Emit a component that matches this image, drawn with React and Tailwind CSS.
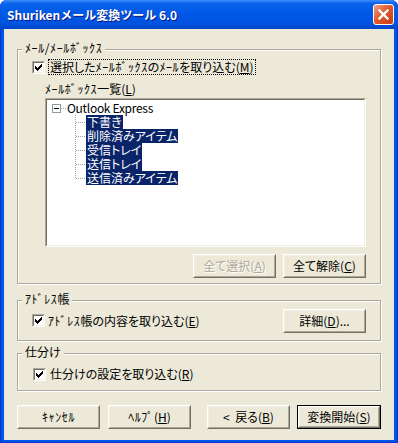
import React from "react";

const folders = ["下書き", "削除済みアイテム", "受信トレイ", "送信トレイ", "送信済みアイテム"];

function Check() {
    return (
        <svg width="7" height="7" viewBox="0 0 7 7" shapeRendering="crispEdges">
            <path
                d="M6 0h1v1h-1z M5 1h2v1h-2z M0 2h1v1h-1z M4 2h3v1h-3z M0 3h2v1h-2z M3 3h3v1h-3z M0 4h5v1h-5z M1 5h3v1h-3z M2 6h1v1h-1z"
                fill="#000"
            />
        </svg>
    );
}

function Checkbox() {
    return (
        <div className="h-[13px] w-[13px] shrink-0 border border-t-[#ACA899] border-l-[#ACA899] border-b-white border-r-white">
            <div className="flex h-full w-full items-center justify-center border border-t-[#716F64] border-l-[#716F64] border-b-[#F1EFE2] border-r-[#F1EFE2] bg-white">
                <Check />
            </div>
        </div>
    );
}

// half-width katakana run, spaced a little wider like the bitmap UI font
function H({ children }) {
    return <span className="tracking-[0.6px]">{children}</span>;
}

function Key({ k }) {
    return <span className="underline underline-offset-[1px]">{k}</span>;
}

function Btn({ children, disabled, isDefault, className = "" }) {
    const face = (
        <div className="h-full w-full border border-t-white border-l-white border-b-[#716F64] border-r-[#716F64]">
            <div
                className={
                    "flex h-full w-full items-center justify-center whitespace-pre border border-t-[#F1EFE2] border-l-[#F1EFE2] border-b-[#ACA899] border-r-[#ACA899] " +
                    (disabled ? "text-[#ACA899] [text-shadow:1px_1px_0_#fff]" : "text-black")
                }
            >
                {children}
            </div>
        </div>
    );
    return (
        <div className={"h-[24px] shrink-0 " + (isDefault ? "border border-black " : "") + className}>
            {face}
        </div>
    );
}

function Group({ label, className = "", children }) {
    return (
        <div className={"relative shrink-0 border border-[#ACA899] shadow-[inset_1px_1px_0_#fff,1px_1px_0_#fff] " + className}>
            <span className="absolute left-[4px] top-[-9px] bg-[#ECE9D8] px-[3px] leading-[14px]">{label}</span>
            {children}
        </div>
    );
}

function ParentLine() {
    return (
        <svg width="20" height="14" viewBox="0 0 20 14" shapeRendering="crispEdges" className="shrink-0">
            <rect x="5.5" y="3.5" width="8" height="8" fill="#fff" stroke="#919B9C" />
            <rect x="7" y="7" width="5" height="1" fill="#000" />
            <line x1="14" y1="7.5" x2="20" y2="7.5" stroke="#A0A0A0" strokeDasharray="1 1" />
        </svg>
    );
}

function ChildLine({ last }) {
    return (
        <svg width="39" height="14" viewBox="0 0 39 14" shapeRendering="crispEdges" className="shrink-0">
            <line x1="28.5" y1="0" x2="28.5" y2={last ? 8 : 14} stroke="#A0A0A0" strokeDasharray="1 1" />
            <line x1="29" y1="7.5" x2="38" y2="7.5" stroke="#A0A0A0" strokeDasharray="1 1" />
        </svg>
    );
}

export default function App() {
    return (
        <div className="h-[443px] w-[398px] bg-white font-['Noto_Sans_CJK_JP','Noto_Sans',sans-serif]">
            <div className="flex h-full w-full flex-col overflow-hidden rounded-t-[7px] bg-[#0055E5] shadow-[inset_1px_0_0_#0831D9,inset_-1px_0_0_#0831D9,inset_0_-1px_0_#0831D9]">
                {/* title bar */}
                <div className="flex h-[29px] shrink-0 items-center bg-[linear-gradient(to_bottom,#3D8DF8_0%,#0A62EC_12%,#0058E8_45%,#0053E0_80%,#0046C8_100%)] pl-[7px] pr-[4px]">
                    <span className="text-[12px] font-bold leading-[14px] text-white [text-shadow:1px_1px_0_#0A1883]">
                        Shurikenメール変換ツール 6.0
                    </span>
                    <div className="ml-auto flex h-[21px] w-[21px] items-center justify-center rounded-[3px] border border-white bg-[linear-gradient(135deg,#F2A285_0%,#E2592F_45%,#C63A12_100%)]">
                        <svg width="11" height="11" viewBox="0 0 11 11">
                            <path d="M1.5 1.5L9.5 9.5M9.5 1.5L1.5 9.5" stroke="#fff" strokeWidth="2.4" strokeLinecap="square" />
                        </svg>
                    </div>
                </div>

                {/* body */}
                <div className="flex flex-1 flex-col px-[4px] pb-[3px]">
                    <div className="flex flex-1 flex-col bg-[#ECE9D8] px-[13px] text-[12px] leading-[14px] text-black [font-feature-settings:'palt']">
                        <Group label={<H>ﾒｰﾙ/ﾒｰﾙﾎﾞｯｸｽ</H>} className="mt-[20px] h-[235px]">
                            <div className="flex flex-col px-[14px]">
                                <div className="mt-[9px] flex h-[16px] items-center">
                                    <Checkbox />
                                    <span className="ml-[3px] flex h-[16px] items-center border border-dotted border-black px-[1px]">
                                        選択した<H>ﾒｰﾙﾎﾞｯｸｽ</H>の<H>ﾒｰﾙ</H>を取り込む(<Key k="M" />)
                                    </span>
                                </div>
                                <div className="ml-[13px] mt-[7px] h-[14px]">
                                    <H>ﾒｰﾙﾎﾞｯｸｽ</H>一覧(<Key k="L" />)
                                </div>
                                <div className="ml-[13px] mt-[2px] h-[149px] w-[321px] border border-t-[#ACA899] border-l-[#ACA899] border-b-white border-r-white">
                                    <div className="h-full w-full border border-t-[#716F64] border-l-[#716F64] border-b-[#F1EFE2] border-r-[#F1EFE2] bg-white pt-[1px]">
                                        <div className="flex h-[14px] items-center">
                                            <ParentLine />
                                            <span className="tracking-[-0.3px]">Outlook Express</span>
                                        </div>
                                        {folders.map((f, i) => (
                                            <div key={f} className="flex h-[14px] items-center">
                                                <ChildLine last={i === folders.length - 1} />
                                                <div className="flex h-[14px] items-center bg-[#0A246A] px-[1px] text-white">{f}</div>
                                            </div>
                                        ))}
                                    </div>
                                </div>
                                <div className="mt-[7px] flex justify-end gap-[7px]">
                                    <Btn disabled className="w-[83px]">
                                        全て選択(<Key k="A" />)
                                    </Btn>
                                    <Btn className="w-[83px]">
                                        全て解除(<Key k="C" />)
                                    </Btn>
                                </div>
                            </div>
                        </Group>

                        <Group label={<><H>ｱﾄﾞﾚｽ</H>帳</>} className="mt-[16px] h-[41px]">
                            <div className="flex h-full items-center px-[14px]">
                                <Checkbox />
                                <span className="ml-[3px]">
                                    <H>ｱﾄﾞﾚｽ</H>帳の内容を取り込む(<Key k="E" />)
                                </span>
                                <Btn className="ml-auto w-[83px]">
                                    詳細(<Key k="D" />)...
                                </Btn>
                            </div>
                        </Group>

                        <Group label="仕分け" className="mt-[12px] h-[38px]">
                            <div className="flex items-center pl-[15px] pt-[13px]">
                                <Checkbox />
                                <span className="ml-[4px]">
                                    仕分けの設定を取り込む(<Key k="R" />)
                                </span>
                            </div>
                        </Group>

                        <div className="mt-[14px] flex">
                            <Btn className="w-[83px]">
                                <H>ｷｬﾝｾﾙ</H>
                            </Btn>
                            <Btn className="ml-[8px] w-[83px]">
                                <H>ﾍﾙﾌﾟ</H>(<Key k="H" />)
                            </Btn>
                            <Btn className="ml-[16px] w-[83px]">
                                {"<  戻る("}
                                <Key k="B" />)
                            </Btn>
                            <Btn isDefault className="ml-[7px] w-[84px]">
                                変換開始(<Key k="S" />)
                            </Btn>
                        </div>
                    </div>
                </div>
            </div>
        </div>
    );
}
